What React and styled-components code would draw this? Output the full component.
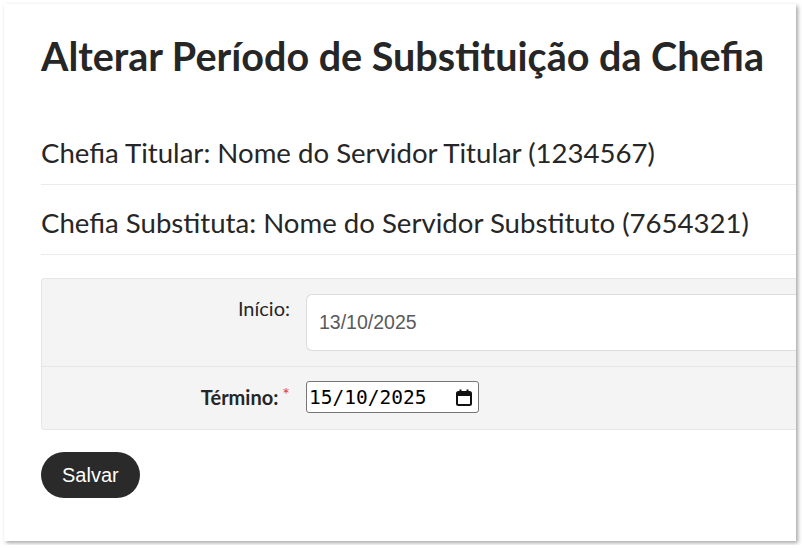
import React from "react";
import styled, { createGlobalStyle } from "styled-components";

const GlobalStyle = createGlobalStyle`
  html, body {
    margin: 0;
    padding: 0;
    background: #ffffff;
  }
  body {
    padding: 4px;
    font-family: "Lato", "Liberation Sans", sans-serif;
    color: #262626;
  }
`;

const Card = styled.section`
  width: 792px;
  height: 537px;
  background: #fff;
  box-shadow: 2px 2px 4px rgba(0, 0, 0, 0.35);
  overflow: hidden;
  padding-left: 37px;
  box-sizing: border-box;
`;

const Title = styled.h1`
  margin: 0;
  padding-top: 28px;
  font-size: 39.5px;
  font-weight: 700;
  line-height: 48px;
  color: #262626;
  white-space: nowrap;
`;

const InfoList = styled.div`
  margin-top: 35px;
`;

const InfoRow = styled.div`
  height: 70px;
  box-sizing: border-box;
  padding-top: 6px;
  border-bottom: 1px solid #ebebeb;
  display: flex;
  align-items: center;
  font-size: 27.6px;
  color: #262626;
  white-space: nowrap;
`;

const Form = styled.div`
  margin-top: 23px;
  background: #f4f4f4;
  border: 1px solid #e6e6e6;
  border-right: none;
  border-radius: 4px 0 0 4px;
`;

const FormRow = styled.div`
  display: grid;
  grid-template-columns: 248px 1fr;
  column-gap: 16px;
  align-items: ${(p) => (p.$top ? "start" : "center")};
  padding: ${(p) => p.$pad};
  border-bottom: ${(p) => (p.$last ? "none" : "1px solid #e6e6e6")};
`;

const Label = styled.label`
  text-align: right;
  font-size: 20px;
  font-weight: ${(p) => (p.$bold ? 700 : 400)};
  color: #262626;
  padding-top: ${(p) => p.$offset || "0"};
  white-space: nowrap;
`;

const Required = styled.span`
  color: #e0442b;
  margin-left: 4px;
  font-weight: 400;
  font-size: 18px;
  position: relative;
  top: -4px;
`;

const TextInput = styled.input`
  height: 57px;
  box-sizing: border-box;
  border: 1px solid #dcdcdc;
  border-right: none;
  border-radius: 6px 0 0 6px;
  background: #fff;
  padding: 0 12px;
  font-family: "Liberation Sans", Arial, sans-serif;
  font-size: 19.5px;
  color: #5a5a5a;
  width: 100%;
  outline: none;
`;

const DateBox = styled.div`
  width: 173px;
  height: 32px;
  box-sizing: border-box;
  border: 1px solid #767676;
  border-radius: 3px;
  background: #fff;
  display: flex;
  align-items: center;
  justify-content: space-between;
  padding: 0 6px 0 2px;
  font-family: "DejaVu Sans Mono", "Liberation Mono", monospace;
  font-size: 19.5px;
  color: #000;
`;

const Button = styled.button`
  margin-top: 22px;
  height: 46px;
  padding: 0 21px;
  border: none;
  border-radius: 23px;
  background: #2a2a2a;
  color: #fff;
  font-family: "Liberation Sans", Arial, sans-serif;
  font-size: 20px;
`;

const CalendarIcon = () => (
  <svg width="16" height="17" viewBox="0 0 16 17" fill="none">
    <rect x="1" y="3" width="14" height="13" rx="1.5" stroke="#111" strokeWidth="2" />
    <rect x="1" y="3" width="14" height="4" fill="#111" />
    <rect x="3.5" y="0.5" width="2" height="3" fill="#111" />
    <rect x="10.5" y="0.5" width="2" height="3" fill="#111" />
  </svg>
);

export default function App() {
  return (
    <>
      <GlobalStyle />
      <Card>
        <Title>Alterar Período de Substituição da Chefia</Title>
        <InfoList>
          <InfoRow>Chefia Titular: Nome do Servidor Titular (1234567)</InfoRow>
          <InfoRow>Chefia Substituta: Nome do Servidor Substituto (7654321)</InfoRow>
        </InfoList>
        <Form>
          <FormRow $top $pad="15px 0 15px 0">
            <Label $offset="2px">Início:</Label>
            <TextInput readOnly value="13/10/2025" />
          </FormRow>
          <FormRow $last $pad="14px 0 16px 0">
            <Label $bold>
              Término:<Required>*</Required>
            </Label>
            <DateBox>
              <span>15/10/2025</span>
              <CalendarIcon />
            </DateBox>
          </FormRow>
        </Form>
        <Button>Salvar</Button>
      </Card>
    </>
  );
}
